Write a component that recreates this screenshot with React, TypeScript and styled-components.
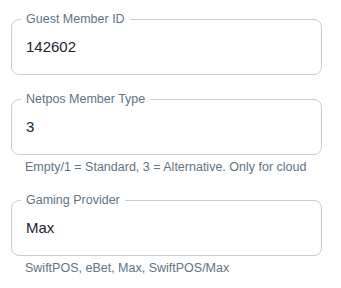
import React from 'react'
import styled, { createGlobalStyle } from 'styled-components'

const GlobalStyle = createGlobalStyle`
    body {
        margin: 0;
        background: #ffffff;
        font-family: "Liberation Sans", Arial, sans-serif;
    }
`

const Form = styled.div`
    display: flex;
    flex-direction: column;
    gap: 17px;
    padding: 12px 19px 0 11px;
`

const FieldGroup = styled.div`
    display: flex;
    flex-direction: column;
`

const Outline = styled.fieldset`
    margin: 0;
    min-width: 0;
    padding: 0 9px;
    border: 1px solid #c9ccd1;
    border-radius: 8px;
`

const Label = styled.legend`
    padding: 0 5px;
    font-size: 12.5px;
    line-height: 14px;
    color: #637381;
`

const Value = styled.div`
    padding: 11px 5px 17px;
    font-size: 15px;
    line-height: 20px;
    color: #1c252e;
`

const Helper = styled.div`
    margin-top: 4px;
    padding-left: 14px;
    font-size: 12.5px;
    line-height: 17px;
    color: #637381;
`

type FieldProps = {
    label: string
    value: string
    helper?: string
}

const Field: React.FunctionComponent<FieldProps> = ({ label, value, helper }) => {
    return (
        <FieldGroup>
            <Outline>
                <Label>{label}</Label>
                <Value>{value}</Value>
            </Outline>
            {helper && <Helper>{helper}</Helper>}
        </FieldGroup>
    )
}

const App: React.FunctionComponent = () => {
    return (
        <>
        <GlobalStyle />
        <Form>
            <Field label="Guest Member ID" value="142602" />
            <Field
                label="Netpos Member Type"
                value="3"
                helper="Empty/1 = Standard, 3 = Alternative. Only for cloud"
            />
            <Field
                label="Gaming Provider"
                value="Max"
                helper="SwiftPOS, eBet, Max, SwiftPOS/Max"
            />
        </Form>
        </>
    )
}

export default App
